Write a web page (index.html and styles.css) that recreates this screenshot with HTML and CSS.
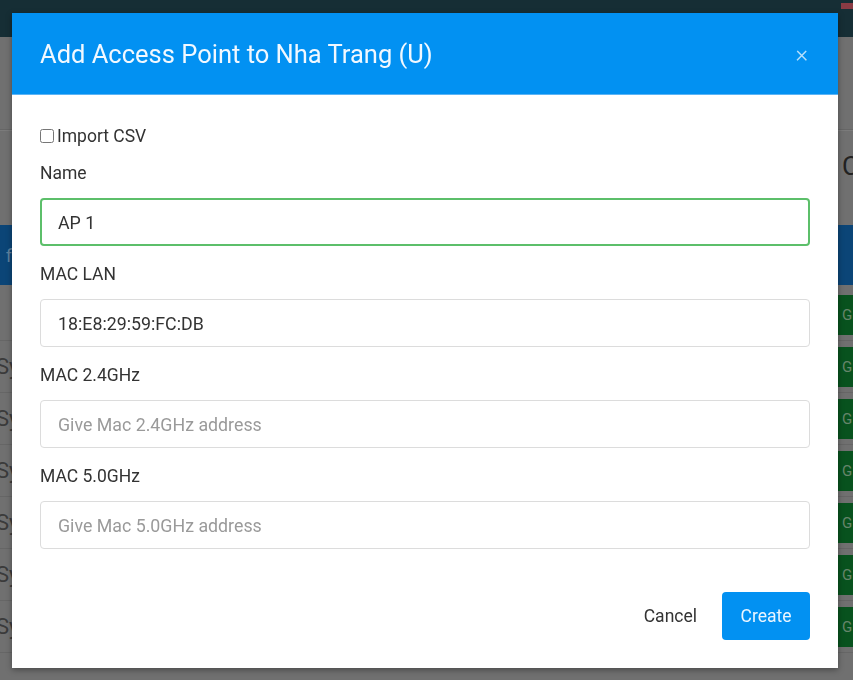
FILE: index.html
```html
<!DOCTYPE html>
<html>
<head>
  <title>Add Access Point</title>
  <meta name="viewport" content="width=device-width, initial-scale=1.0">
  <link rel="stylesheet" href="styles.css">
</head>
<body>

  <div class="page">
    <div class="topbar"><span class="flag"></span></div>
    <div class="toolbar"></div>
    <div class="search-row"><span class="search-letter">C</span></div>
    <div class="table-head"><span class="head-text">fi</span></div>
    <div class="table-rows">
      <div class="row"><span class="row-text"></span><span class="row-btn">G</span></div>
      <div class="row"><span class="row-text">Sy</span><span class="row-btn">G</span></div>
      <div class="row"><span class="row-text">Sy</span><span class="row-btn">G</span></div>
      <div class="row"><span class="row-text">Sy</span><span class="row-btn">G</span></div>
      <div class="row"><span class="row-text">Sy</span><span class="row-btn">G</span></div>
      <div class="row"><span class="row-text">Sy</span><span class="row-btn">G</span></div>
      <div class="row"><span class="row-text">Sy</span><span class="row-btn">G</span></div>
    </div>
  </div>

  <div class="modal">
    <div class="modal-header">
      <h1 class="modal-title">Add Access Point to Nha Trang (U)</h1>
      <span class="modal-close">×</span>
    </div>

    <form class="modal-body" onsubmit="event.preventDefault();">
      <label class="check-row">
        <input type="checkbox" class="check">Import CSV
      </label>

      <div class="form-group">
        <label class="field-label">Name</label>
        <input type="text" class="field field-valid" value="AP 1">
      </div>

      <div class="form-group">
        <label class="field-label">MAC LAN</label>
        <input type="text" class="field" value="18:E8:29:59:FC:DB">
      </div>

      <div class="form-group">
        <label class="field-label">MAC 2.4GHz</label>
        <input type="text" class="field" placeholder="Give Mac 2.4GHz address">
      </div>

      <div class="form-group">
        <label class="field-label">MAC 5.0GHz</label>
        <input type="text" class="field" placeholder="Give Mac 5.0GHz address">
      </div>
    </form>

    <div class="modal-footer">
      <button class="btn btn-cancel">Cancel</button>
      <button class="btn btn-create">Create</button>
    </div>
  </div>

</body>
</html>
```

FILE: styles.css
```css
* {
  margin: 0;
  padding: 0;
  box-sizing: border-box;
}

html, body {
  height: 100%;
  font-family: Roboto, "Liberation Sans", Arial, sans-serif;
  background: #6d6d6d;
  overflow: hidden;
}

/* dimmed page behind the dialog */
.page {
  height: 100%;
  background: #707070;
}

.topbar {
  height: 37px;
  background: #162e35;
  position: relative;
}

.flag {
  position: absolute;
  top: 3px;
  right: 0;
  width: 12px;
  height: 6px;
  background: #8a3b44;
}

.toolbar {
  height: 93px;
  border-bottom: 1px solid #666;
}

.search-row {
  height: 95px;
  border-top: 1px solid #7b7b7b;
  display: flex;
  justify-content: flex-end;
  padding-top: 20px;
}

.search-letter {
  font-size: 26px;
  color: #222;
  margin-right: -6px;
}

.table-head {
  height: 60px;
  background: #0b4577;
  display: flex;
  align-items: center;
  padding-left: 6px;
}

.head-text {
  font-size: 18px;
  color: #5f819e;
}

.table-rows {
  padding-top: 4px;
}

.row {
  height: 52px;
  display: flex;
  justify-content: space-between;
  align-items: center;
  border-bottom: 1px solid #666;
}

.row-text {
  font-size: 22px;
  color: #3b3b3b;
  margin-left: -4px;
}

.row-btn {
  width: 40px;
  height: 40px;
  background: #08521e;
  color: #66856b;
  font-size: 15px;
  line-height: 40px;
  padding-left: 4px;
  margin-right: -25px;
}

/* dialog */
.modal {
  position: fixed;
  top: 13px;
  left: 12px;
  width: 826px;
  height: 655px;
  background: #fff;
  box-shadow: 0 2px 6px rgba(0, 0, 0, 0.35);
}

.modal-header {
  height: 82px;
  background: #0291f2;
  border-bottom: 1px solid #5cb4f5;
  display: flex;
  align-items: center;
  justify-content: space-between;
  padding: 0 28px;
}

.modal-title {
  font-size: 25.5px;
  font-weight: 400;
  color: #f1f8ff;
}

.modal-close {
  font-size: 24px;
  font-weight: 300;
  color: #b9e0fb;
  margin-right: 2px;
}

.modal-body {
  padding: 31px 28px 0;
}

.check-row {
  display: flex;
  align-items: center;
  font-size: 17.5px;
  color: #333;
  height: 20px;
  margin-bottom: 17px;
}

.check {
  width: 14px;
  height: 14px;
  margin: 0 3px 0 0;
}

.form-group {
  margin-bottom: 18px;
}

.field-label {
  display: block;
  font-size: 17.5px;
  line-height: 20px;
  color: #333;
  margin-bottom: 15px;
}

.field {
  display: block;
  width: 100%;
  height: 48px;
  padding: 0 17px;
  border: 1px solid #dcdcdc;
  border-radius: 4px;
  font-family: inherit;
  font-size: 17.8px;
  color: #333;
  outline: none;
}

.field::placeholder {
  color: #9a9a9a;
}

.field-valid {
  border: 2px solid #5cbf6a;
  padding-left: 16px;
}

.modal-footer {
  display: flex;
  justify-content: flex-end;
  align-items: center;
  gap: 25px;
  padding: 25px 28px 0;
}

.btn {
  font-family: inherit;
  font-size: 17.5px;
  border: none;
  background: none;
  cursor: pointer;
}

.btn-cancel {
  color: #333;
}

.btn-create {
  width: 88px;
  height: 48px;
  background: #0291f2;
  color: #eaf5ff;
  border-radius: 4px;
}
```
